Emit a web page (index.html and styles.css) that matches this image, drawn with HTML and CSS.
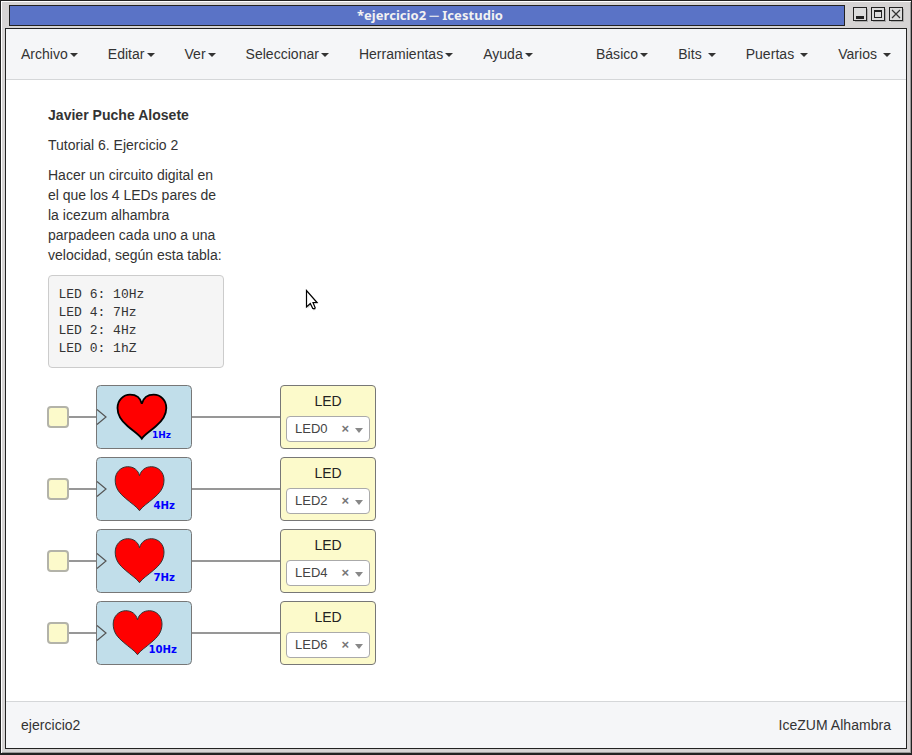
FILE: index.html
```html
<!DOCTYPE html>
<html lang="es">
<head>
<meta charset="utf-8">
<title>*ejercicio2 ─ Icestudio</title>
<link rel="stylesheet" href="styles.css">
</head>
<body>
<svg class="defs" width="0" height="0">
  <symbol id="heart" viewBox="0 0 96 64">
    <path d="M45.800 53.700C43 49.500 37 46 31.500 41C25.500 36 21.500 31 21.500 23C21.500 15 27.500 9.700 34 9.700C40 9.700 44.500 13 45.800 18.800C47.300 13 52 9.700 57.700 9.700C64.500 9.700 70.300 15 70.300 23C70.300 31 66.100 36 60.100 41C54.600 46 48.600 49.500 45.800 53.700Z"/>
  </symbol>
</svg>
<div class="window">
  <header class="titlebar">
    <div class="title">*ejercicio2 ─ Icestudio</div>
    <div class="controls">
      <svg width="15" height="15" shape-rendering="crispEdges"><path d="M14.500 2V14.500H2" stroke="#aaa" fill="none"/><rect x=".5" y=".5" width="13" height="13" fill="#dcdcdc" stroke="#222"/><path d="M3 9h8v3H3z" fill="#222"/></svg>
      <svg width="15" height="15" shape-rendering="crispEdges"><path d="M14.500 2V14.500H2" stroke="#aaa" fill="none"/><rect x=".5" y=".5" width="13" height="13" fill="#dcdcdc" stroke="#222"/><path d="M3.500 3.500h7v7h-7zM3 4.500h8" fill="none" stroke="#222"/></svg>
      <svg width="15" height="15"><path d="M14.500 2V14.500H2" stroke="#aaa" fill="none"/><rect x=".5" y=".5" width="13" height="13" fill="#dcdcdc" stroke="#222"/><path d="M3 3l8 8M11 3l-8 8" fill="none" stroke="#333" stroke-width="1.200"/></svg>
    </div>
  </header>
  <div class="app">
    <nav class="menubar">
      <div class="menu">
        <a>Archivo<b class="caret"></b></a>
        <a>Editar<b class="caret"></b></a>
        <a>Ver<b class="caret"></b></a>
        <a>Seleccionar<b class="caret"></b></a>
        <a>Herramientas<b class="caret"></b></a>
        <a>Ayuda<b class="caret"></b></a>
      </div>
      <div class="menu boards">
        <a>Básico<b class="caret"></b></a>
        <a>Bits <b class="caret"></b></a>
        <a>Puertas <b class="caret"></b></a>
        <a>Varios <b class="caret"></b></a>
      </div>
    </nav>
    <main class="canvas">
      <section class="info">
        <p><strong>Javier Puche Alosete</strong></p>
        <p>Tutorial 6. Ejercicio 2</p>
        <p>Hacer un circuito digital en el que los 4 LEDs pares de la icezum alhambra parpadeen cada uno a una velocidad, según esta tabla:</p>
        <pre>LED 6: 10Hz
LED 4: 7Hz
LED 2: 4Hz
LED 0: 1hZ</pre>
      </section>
      <section class="circuit">
        <div class="row">
          <i class="port"></i><i class="wire in"></i>
          <svg class="block" width="96" height="64"><rect class="body" x=".5" y=".5" width="95" height="63" rx="4"/><path class="clock" d="M1 24.500L10 32L1 39.500"/><use class="heart bold" href="#heart" width="96" height="64"/><text x="56" y="53" font-size="9" textLength="19" lengthAdjust="spacingAndGlyphs">1Hz</text></svg>
          <i class="wire out"></i>
          <div class="led"><span>LED</span><div class="select"><span>LED0</span><b>×</b><i></i></div></div>
        </div>
        <div class="row">
          <i class="port"></i><i class="wire in"></i>
          <svg class="block" width="96" height="64"><rect class="body" x=".5" y=".5" width="95" height="63" rx="4"/><path class="clock" d="M1 24.500L10 32L1 39.500"/><use class="heart" href="#heart" x="-2.300" width="96" height="64"/><text x="57.500" y="52" font-size="11" textLength="21.500" lengthAdjust="spacingAndGlyphs">4Hz</text></svg>
          <i class="wire out"></i>
          <div class="led"><span>LED</span><div class="select"><span>LED2</span><b>×</b><i></i></div></div>
        </div>
        <div class="row">
          <i class="port"></i><i class="wire in"></i>
          <svg class="block" width="96" height="64"><rect class="body" x=".5" y=".5" width="95" height="63" rx="4"/><path class="clock" d="M1 24.500L10 32L1 39.500"/><use class="heart" href="#heart" x="-2.300" width="96" height="64"/><text x="57.500" y="52" font-size="11" textLength="21.500" lengthAdjust="spacingAndGlyphs">7Hz</text></svg>
          <i class="wire out"></i>
          <div class="led"><span>LED</span><div class="select"><span>LED4</span><b>×</b><i></i></div></div>
        </div>
        <div class="row">
          <i class="port"></i><i class="wire in"></i>
          <svg class="block" width="96" height="64"><rect class="body" x=".5" y=".5" width="95" height="63" rx="4"/><path class="clock" d="M1 24.500L10 32L1 39.500"/><use class="heart" href="#heart" x="-4.300" width="96" height="64"/><text x="52.500" y="52" font-size="11" textLength="28.500" lengthAdjust="spacingAndGlyphs">10Hz</text></svg>
          <i class="wire out"></i>
          <div class="led"><span>LED</span><div class="select"><span>LED6</span><b>×</b><i></i></div></div>
        </div>
      </section>
      <svg class="pointer" width="16" height="24"><path d="M2.500 3V19.500L6 16L8.500 21.500L11 20.500L8.800 15H13.500Z" fill="#999" opacity=".45"/><path d="M1.500 1.500V18L5.300 14.500L7.800 19.500Q9.200 20.200 10.200 18.800L8 13.500H12Z" fill="#fff" stroke="#000" stroke-width="1.200"/></svg>
    </main>
    <footer class="status"><span>ejercicio2</span><span>IceZUM Alhambra</span></footer>
  </div>
</div>
</body>
</html>
```
FILE: styles.css
```css
* { box-sizing: border-box; }
body {
  margin: 0;
  font: 14px/20px "Liberation Sans", Arial, sans-serif;
  color: #333;
}
.defs { position: absolute; }
.window {
  width: 912px;
  height: 755px;
  display: flex;
  flex-direction: column;
  padding: 3px 4px 4px;
  background: #d6d4d4;
  border: 1px solid #222;
  border-bottom-width: 2px;
  box-shadow: inset 1px 1px #fff, inset -1px -1px #999;
}
.titlebar {
  display: flex;
  height: 24px;
  padding: 1px 2px 2px 4px;
}
.title {
  width: 836px;
  height: 21px;
  border: 1px solid #222;
  background: #5a73c6;
  color: #f2f2f2;
  font: bold 13px/19px "Noto Sans", sans-serif;
  letter-spacing: .04px;
  text-align: center;
  padding-left: 6px;
}
.controls { display: flex; gap: 3px; margin: 2px 0 0 8px; }
.controls svg { display: block; flex: none; }
.app {
  display: flex;
  flex-direction: column;
  width: 902px;
  height: 721px;
  border: 1px solid #222;
  background: #fff;
}
.menubar {
  display: flex;
  justify-content: space-between;
  height: 51px;
  background: #f5f6f8;
  border-bottom: 1px solid #d5d7d9;
}
.menu { display: flex; letter-spacing: .018px; }
.boards { letter-spacing: .045px; }
.menu a { padding: 15px; white-space: nowrap; }
.caret {
  display: inline-block;
  margin-left: 2px;
  vertical-align: middle;
  border: 4px solid transparent;
  border-top-color: #333;
  border-bottom: 0;
}
.canvas { flex: 1; position: relative; padding: 25px 42px; }
.info { width: 176px; }
.info p { margin: 0 0 10px; }
.info strong { letter-spacing: .03px; }
.info pre {
  margin: 0;
  padding: 9.5px;
  font: 13px/18px "Liberation Mono", monospace;
  background: #f5f5f5;
  border: 1px solid #ccc;
  border-radius: 4px;
}
.circuit { display: flex; flex-direction: column; gap: 8px; margin-top: 17px; }
.row { display: flex; align-items: center; height: 64px; margin-left: -1px; }
.port {
  width: 22px;
  height: 22px;
  border: 2px solid #b3b3a9;
  border-radius: 4px;
  background: #fcfacb;
}
.wire { height: 2px; background: #979797; }
.in { width: 27px; }
.out { width: 88px; }
.block { display: block; }
.body { fill: #c1deea; stroke: #777; }
.clock { fill: none; stroke: #555; stroke-width: 1.2; }
.heart { fill: #f00; stroke: #333; stroke-width: 1; }
.heart.bold { stroke: #000; stroke-width: 1.8; }
.block text { font-family: "DejaVu Sans", sans-serif; font-weight: bold; fill: #00f; }
.led {
  width: 96px;
  height: 64px;
  padding: 5px 5px 0;
  border: 1px solid #777;
  border-radius: 4px;
  background: #fcfacb;
  color: #222;
  text-align: center;
}
.led > span { display: block; }
.select {
  display: flex;
  align-items: center;
  height: 26px;
  margin-top: 5px;
  padding: 0 6px 0 8px;
  border: 1px solid #aaa;
  border-radius: 4px;
  background: #fff;
  color: #444;
  font-size: 13px;
}
.select b { margin-left: auto; color: #777; }
.select i {
  margin: 2px 0 0 6px;
  border: 4px solid transparent;
  border-top: 5px solid #888;
  border-bottom: 0;
}
.pointer { position: absolute; left: 299px; top: 209px; }
.status {
  display: flex;
  justify-content: space-between;
  height: 47px;
  padding: 13px 15px;
  background: #f5f6f8;
  border-top: 1px solid #d5d7d9;
  letter-spacing: .03px;
}
```
